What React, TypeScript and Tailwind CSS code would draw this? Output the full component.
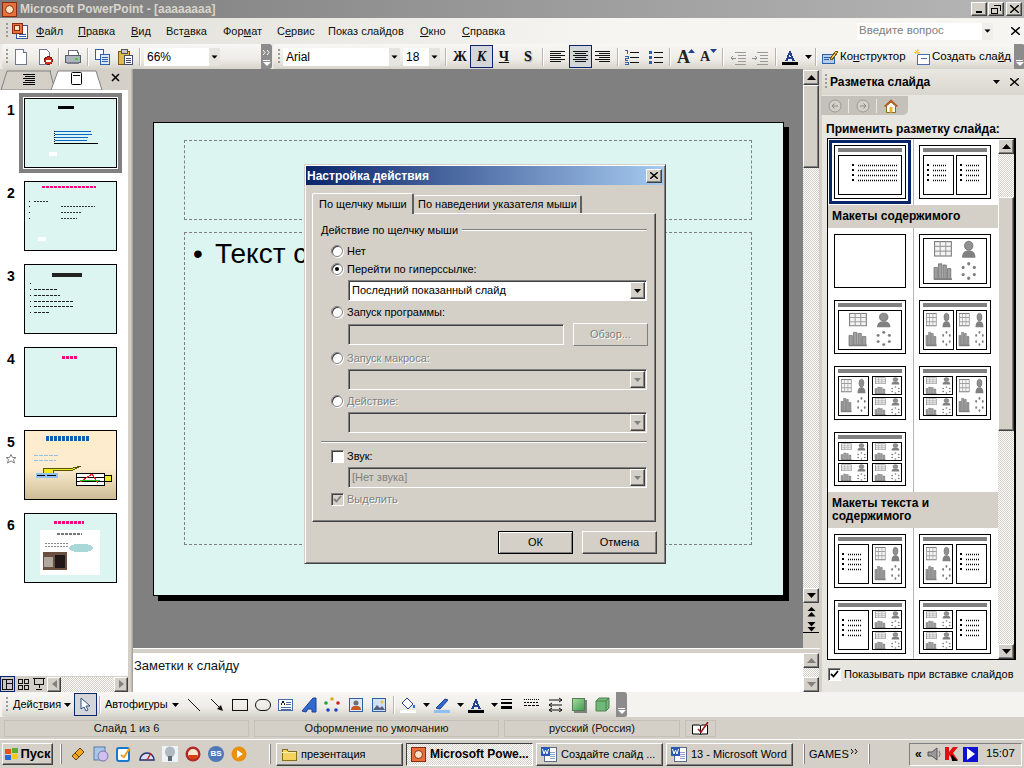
import type { ReactNode } from "react";

const raised =
  "border border-t-white border-l-white border-r-[#404040] border-b-[#404040] bg-[#d4d0c8] shadow-[inset_-1px_-1px_0_#808080]";
const sunken =
  "border border-t-[#808080] border-l-[#808080] border-r-white border-b-white shadow-[inset_1px_1px_0_#404040]";
const checker = "bg-[repeating-conic-gradient(#d4d0c8_0_25%,#ffffff_0_50%)] bg-[length:2px_2px]";
const disabledText = "text-[#808080] [text-shadow:1px_1px_0_#ffffff]";
const band = "bg-[linear-gradient(#f8f7f4,#eeece7_60%,#d6d3ca)]";

function Ic({ c = "", w = 16, h = 16, children }: { c?: string; w?: number; h?: number; children: ReactNode }) {
  return (
    <svg width={w} height={h} viewBox={`0 0 ${w} ${h}`} className={`shrink-0 block ${c}`} shapeRendering="crispEdges">
      {children}
    </svg>
  );
}

function Grip({ c = "" }: { c?: string }) {
  return <div className={`w-[2px] h-[16px] shrink-0 bg-[repeating-linear-gradient(#9c9a92_0_2px,transparent_2px_4px)] ${c}`} />;
}

function Sep({ c = "" }: { c?: string }) {
  return <div className={`w-px h-[18px] shrink-0 bg-[#b8b5ac] shadow-[1px_0_0_#ffffff] ${c}`} />;
}

function Chevron({ c = "", more = false }: { c?: string; more?: boolean }) {
  return (
    <div className={`w-[11px] h-[25px] shrink-0 bg-[#8c8c8c] rounded-r-[3px] flex flex-col items-center justify-end pb-[3px] ${c}`}>
      {more && (
        <svg width="7" height="5" viewBox="0 0 7 5" className="mb-[5px] block">
          <path d="M0 0l2 2.500L0 5M4 0l2 2.500L4 5" fill="none" stroke="#ffffff" />
        </svg>
      )}
      <div className="w-[7px] h-px bg-white mb-px" />
      <div className="w-0 h-0 border-x-[4px] border-x-transparent border-t-[4px] border-t-white" />
    </div>
  );
}

function Arrow({ c = "", color = "#000000" }: { c?: string; color?: string }) {
  return (
    <svg width="7" height="4" viewBox="0 0 7 4" className={`shrink-0 block ${c}`}>
      <path d="M0 0h7L3.500 4z" fill={color} />
    </svg>
  );
}

function TbCombo({ w, label }: { w: string; label: string }) {
  return (
    <div className={`${w} h-[18px] bg-white shrink-0 flex items-center pl-[3px] text-[12px] text-black`}>
      <span className="flex-1">{label}</span>
      <div className="w-[11px] h-full bg-[#e6e4de] flex items-center justify-center">
        <Arrow c="scale-90" />
      </div>
    </div>
  );
}

function ToolLetter({ c = "", active = false, children }: { c?: string; active?: boolean; children: ReactNode }) {
  return (
    <div
      className={`shrink-0 flex items-center justify-center font-['Liberation_Serif',serif] font-bold text-[14px] text-[#111111] ${
        active ? "w-[23px] h-[23px] border border-[#0a246a] bg-[#d5d6da]" : "w-[18px] h-[22px]"
      } ${c}`}
    >
      {children}
    </div>
  );
}

function Lines({ rows }: { rows: [number, number][] }) {
  return (
    <Ic>
      {rows.map(([a, b], i) => (
        <rect key={i} x={a} y={2 + i * 2} width={b - a} height="1" fill="#111111" />
      ))}
    </Ic>
  );
}

function Doc() {
  return (
    <Ic>
      <path d="M2.500 .5h8l3 3v12h-11z" fill="#ffffff" stroke="#6f7a90" />
      <path d="M10.500 .5v3h3" fill="#dfe5f2" stroke="#6f7a90" />
    </Ic>
  );
}

function DocPerm() {
  return (
    <Ic>
      <path d="M2.500 .5h7l3 3v12h-10z" fill="#ffffff" stroke="#6f7a90" />
      <circle cx="11.500" cy="11.500" r="4" fill="#d62b1f" stroke="#7a1510" />
      <rect x="9" y="11" width="5" height="1.500" fill="#ffffff" />
    </Ic>
  );
}

function Printer() {
  return (
    <Ic>
      <path d="M4 1h8l2 5H3z" fill="#ffffff" stroke="#6a6f7c" />
      <rect x=".5" y="6.500" width="15" height="7" rx="1" fill="#aeb4bf" stroke="#5a5f6c" />
      <rect x="10" y="9" width="3" height="2" fill="#3dd13a" />
      <rect x="2" y="13" width="12" height="2" fill="#7b808c" />
    </Ic>
  );
}

function Copy() {
  return (
    <Ic>
      <rect x="1.500" y=".5" width="8" height="10" fill="#ffffff" stroke="#2f5fa8" />
      <rect x="6.500" y="5.500" width="9" height="10" fill="#dbe7fa" stroke="#2f5fa8" />
      <path d="M8 8h6M8 10h6M8 12h6" stroke="#2f5fa8" />
    </Ic>
  );
}

function Paste() {
  return (
    <Ic>
      <rect x="1.500" y="2.500" width="11" height="13" fill="#e3b94e" stroke="#7d5a14" />
      <rect x="4" y="0" width="6" height="4" fill="#c9c9c9" stroke="#555555" />
      <rect x="7.500" y="6.500" width="8" height="9" fill="#ffffff" stroke="#44506a" />
      <path d="M9 9h5M9 11h5M9 13h5" stroke="#44506a" />
    </Ic>
  );
}

function Numbering() {
  return (
    <Ic>
      <path d="M1 1h2v4M1 7h3v2H1v2h3M1 13h3v2H1" fill="none" stroke="#2f5fa8" />
      <path d="M6 3h9M6 8h9M6 13h9" stroke="#111111" />
    </Ic>
  );
}

function Bullets() {
  return (
    <Ic>
      <rect x="1" y="2" width="3" height="3" fill="#2f5fa8" />
      <rect x="1" y="7" width="3" height="3" fill="#2f5fa8" />
      <rect x="1" y="12" width="3" height="3" fill="#2f5fa8" />
      <path d="M6 3h9M6 8h9M6 13h9" stroke="#111111" />
    </Ic>
  );
}

function Indent({ flip = false }: { flip?: boolean }) {
  return (
    <Ic w={18}>
      <path d="M6 3h11M9 6h8M9 9h8M9 12h8M6 15h11" stroke="#9a9a94" />
      <path d={flip ? "M1 9h5M4 7l2 2-2 2" : "M7 9H2M4 7L2 9l2 2"} stroke="#8e8e88" fill="none" />
    </Ic>
  );
}

function FontColor({ color = "#000000" }: { color?: string }) {
  return (
    <Ic>
      <path d="M3 12L8 1l5 11h-2.400L9.600 9.500H6.400L5.400 12zM7 8h2L8 5z" fill="#1f3f8f" />
      <rect x="0" y="13" width="16" height="3" fill={color} />
    </Ic>
  );
}

function Designer() {
  return (
    <Ic>
      <rect x=".5" y="5.500" width="12" height="9" fill="#b7ccec" stroke="#2f5fa8" />
      <path d="M2 8h6M2 10h5" stroke="#2f5fa8" />
      <path d="M8 10l6-8 2 1-6 8z" fill="#f0c34a" stroke="#7d5a14" />
    </Ic>
  );
}

function NewSlide() {
  return (
    <Ic>
      <rect x="3.500" y="5.500" width="12" height="10" fill="#ffffff" stroke="#4b6ca8" />
      <path d="M7 9h6" stroke="#4b6ca8" />
      <path d="M3 0v6M0 3h6M1 1l4 4M5 1L1 5" stroke="#f2cc3c" />
    </Ic>
  );
}

function PptIcon() {
  return (
    <div className="w-[15px] h-[15px] bg-[#e8703a] border border-[#8a2a10] flex items-center justify-center shrink-0">
      <div className="w-[9px] h-[9px] rounded-full bg-[#fbe3c4] border border-[#8a2a10]" />
    </div>
  );
}

function MenuDocIcon() {
  return (
    <Ic w={18} h={18} c="ml-[3px]">
      <rect x="5.500" y="3.500" width="11" height="13" fill="#ffffff" stroke="#3a5aa8" />
      <path d="M8 12h7M8 14h7" stroke="#3a5aa8" />
      <rect x="1" y="1" width="10" height="10" fill="#e8703a" stroke="#8a2a10" />
      <circle cx="6" cy="6" r="3" fill="#fbe3c4" stroke="#8a2a10" />
    </Ic>
  );
}

function WordIcon() {
  return (
    <Ic>
      <rect x="3.500" y="1.500" width="12" height="14" fill="#ffffff" stroke="#5a6a8a" />
      <path d="M9 6h5M9 8h5M9 10h5M9 12h5" stroke="#8aa0c8" />
      <rect x="0" y="1" width="9" height="9" fill="#2a58b8" />
      <path d="M1.500 3l1.500 5 1.500-4 1.500 4 1.500-5" stroke="#ffffff" fill="none" shapeRendering="auto" />
    </Ic>
  );
}

function FolderIcon() {
  return (
    <Ic>
      <path d="M1 3h5l1 2h8v9H1z" fill="#f5d25c" stroke="#8a6d14" />
      <path d="M1 6h14" stroke="#fff2b0" />
    </Ic>
  );
}

function ScrollBtn({ dir = "up", c = "", grey = false }: { dir?: "up" | "down"; c?: string; grey?: boolean }) {
  return (
    <div className={`w-[16px] h-[15px] shrink-0 flex items-center justify-center ${raised} ${c}`}>
      <svg width="9" height="5" viewBox="0 0 9 5">
        <path d={dir === "up" ? "M4.500 0L9 5H0z" : "M0 0h9L4.500 5z"} fill={grey ? "#808080" : "#000000"} />
      </svg>
    </div>
  );
}

function DoubleArrow({ dir }: { dir: "up" | "down" }) {
  return (
    <svg width="9" height="10" viewBox="0 0 9 10" className="block">
      <path
        d={dir === "up" ? "M4.500 0L8.500 4H.5zM4.500 5l4 4.500H.5z" : "M.5 0h8l-4 4.500zM.5 5h8l-4 4.500z"}
        fill="#000000"
      />
    </svg>
  );
}

/* slide thumbnails in the left pane */
function SlideThumb({ n, selected = false, star = false, children, bg = "#ddf5f0" }: { n: number; selected?: boolean; star?: boolean; children?: ReactNode; bg?: string }) {
  return (
    <div className="flex h-[83px] shrink-0">
      <div className="w-[24px] pl-[7px] pt-[5px] text-[14px] font-bold text-black leading-[15px]">
        {n}
        {star && (
          <svg width="12" height="10" viewBox="0 0 12 10" className="block mt-[4px] -ml-[2px]">
            <path d="M6 .5l1.500 3h3.500L8.500 5.500l1 3.500L6 7 2.500 9l1-3.500L1 3.500h3.500z" fill="none" stroke="#808080" />
          </svg>
        )}
      </div>
      <svg
        width="93"
        height="70"
        viewBox="0 0 93 70"
        shapeRendering="crispEdges"
        className={`block shrink-0 ${selected ? "outline-[4px] outline-[#808080] outline-offset-[1px]" : ""}`}
      >
        <rect x=".5" y=".5" width="92" height="69" fill={bg} stroke="#000000" />
        {children}
      </svg>
    </div>
  );
}

/* layout previews in the task pane */
function Cluster({ x, y, sx, sy }: { x: number; y: number; sx: number; sy: number }) {
  return (
    <g transform={`translate(${x} ${y}) scale(${sx} ${sy})`}>
      <rect x=".5" y=".5" width="15" height="12" fill="#f4f4f4" stroke="#808080" />
      <path d="M.5 4.500h15M.5 8.500h15M5.500 .5v12M10.500 .5v12" stroke="#a0a0a0" />
      <circle cx="31" cy="4" r="3.800" fill="#909090" stroke="#606060" strokeWidth=".6" />
      <path d="M25 14c0-5 3-6 6-6s6 1 6 6z" fill="#808080" />
      <path d="M0 32V22h3v10zM4 32V19h3v13zM8 32V20h3v12zM12 32V23h3v9z" fill="#a0a0a0" stroke="#606060" strokeWidth=".6" />
      <rect x="0" y="31" width="16" height="1.500" fill="#808080" />
      <g fill="#808080">
        <circle cx="31" cy="19" r="1.400" />
        <circle cx="36" cy="22" r="1.400" />
        <circle cx="36" cy="28" r="1.400" />
        <circle cx="31" cy="31" r="1.400" />
        <circle cx="26" cy="28" r="1.400" />
        <circle cx="26" cy="22" r="1.400" />
      </g>
    </g>
  );
}

function TextList({ x, y, w }: { x: number; y: number; w: number }) {
  return (
    <g>
      {[0, 1, 2, 3].map((i) => (
        <g key={i}>
          <rect x={x} y={y + i * 5} width="2" height="2" fill="#000000" />
          <path d={`M${x + 6} ${y + i * 5 + 1.5}h${w}`} stroke="#000000" strokeWidth="1.500" strokeDasharray="1 1" fill="none" />
        </g>
      ))}
    </g>
  );
}

type Frame = [number, number, number, number, "" | "list" | "big" | "mid" | "small"];

function Layout({ frames, title = true, c = "" }: { frames: Frame[]; title?: boolean; c?: string }) {
  return (
    <svg width="72" height="54" viewBox="0 0 72 54" className={`block shrink-0 ${c}`}>
      <rect x=".5" y=".5" width="71" height="53" fill="#ffffff" stroke="#000000" />
      {title && <rect x="4" y="3" width="64" height="4" fill="#808080" />}
      {frames.map(([x, y, w, h, kind], i) => (
        <g key={i}>
          <rect x={x + 0.5} y={y + 0.5} width={w - 1} height={h - 1} fill="#ffffff" stroke="#000000" />
          {kind === "list" && <TextList x={x + (w > 40 ? 14 : 4)} y={y + (h > 30 ? 9 : 7)} w={w > 40 ? 39 : 14} />}
          {kind === "big" && <Cluster x={x + 11} y={y + 3} sx={1.12} sy={h > 40 ? 1.2 : 1.02} />}
          {kind === "mid" && <Cluster x={x + 3} y={y + 3} sx={0.66} sy={1.02} />}
          {kind === "small" && <Cluster x={x + 3} y={y + 1.5} sx={0.66} sy={0.5} />}
        </g>
      ))}
    </svg>
  );
}

function LayoutRow({ left, right }: { left?: ReactNode; right?: ReactNode }) {
  return (
    <div className="flex shrink-0 h-[66px] pt-[6px] relative">
      <div className="w-[85px] shrink-0 pl-[6px]">{left}</div>
      <div className="w-px -mt-[6px] shrink-0 bg-[#b4b4b0]" />
      <div className="pl-[5px]">{right}</div>
    </div>
  );
}

/* dialog bits */
function Radio({ checked = false, label, disabled = false, c = "" }: { checked?: boolean; label: string; disabled?: boolean; c?: string }) {
  return (
    <div className={`flex items-center h-[14px] pl-[18px] shrink-0 ${c}`}>
      <div className="w-[12px] h-[12px] rounded-full bg-white border border-[#808080] shadow-[inset_1px_1px_0_#404040,1px_1px_0_#ffffff] flex items-center justify-center">
        {checked && <div className="w-[4px] h-[4px] rounded-full bg-black" />}
      </div>
      <span className={`ml-[4px] text-[11px] ${disabled ? disabledText : "text-black"}`}>{label}</span>
    </div>
  );
}

function DlgSelect({ value = "", disabled = false, c = "" }: { value?: string; disabled?: boolean; c?: string }) {
  return (
    <div className={`ml-[35px] w-[299px] h-[21px] flex items-center shrink-0 pr-[1px] ${sunken} ${disabled ? "bg-[#d4d0c8]" : "bg-white"} ${c}`}>
      <span className={`flex-1 pl-[3px] text-[11px] ${disabled ? "text-[#808080]" : "text-black"}`}>{value}</span>
      <div className={`w-[15px] h-[17px] flex items-center justify-center ${raised}`}>
        <Arrow color={disabled ? "#808080" : "#000000"} />
      </div>
    </div>
  );
}

function DlgButton({ label, def = false, c = "" }: { label: string; def?: boolean; c?: string }) {
  return (
    <div className={`w-[75px] h-[23px] flex items-center justify-center text-[11px] text-black bg-[#d4d0c8] ${def ? "border border-black shadow-[inset_1px_1px_0_#ffffff,inset_-1px_-1px_0_#808080]" : raised} ${c}`}>
      {label}
    </div>
  );
}

function Dialog() {
  return (
    <div className="absolute left-[304px] top-[164px] w-[362px] h-[400px] bg-[#d4d0c8] border border-t-[#d4d0c8] border-l-[#d4d0c8] border-r-[#404040] border-b-[#404040] shadow-[inset_1px_1px_0_#ffffff,inset_-1px_-1px_0_#808080] p-[1px] flex flex-col">
      <div className="h-[19px] shrink-0 bg-[linear-gradient(90deg,#0a246a,#a6caf0)] flex items-center justify-between pl-[1px] pr-[2px]">
        <span className="text-white font-bold text-[12px]">Настройка действия</span>
        <div className={`w-[16px] h-[14px] flex items-center justify-center ${raised}`}>
          <svg width="8" height="7" viewBox="0 0 8 7">
            <path d="M0 0l8 7M8 0L0 7" stroke="#000000" strokeWidth="1.400" />
          </svg>
        </div>
      </div>
      <div className="flex items-end h-[28px] shrink-0 pl-[6px] whitespace-nowrap">
        <div className="w-[102px] h-[21px] bg-[#d4d0c8] border-t border-l border-white rounded-t-[2px] border-r-2 border-r-[#606060] -mb-px z-10 flex items-center pl-[6px] text-[11px] text-black">
          По щелчку мыши
        </div>
        <div className="w-[168px] h-[18px] bg-[#d4d0c8] border-t border-white border-r-2 border-r-[#606060] rounded-t-[2px] flex items-center pl-[4px] text-[11px] text-black">
          По наведении указателя мыши
        </div>
      </div>
      <div className="ml-[6px] w-[344px] h-[309px] shrink-0 border border-t-white border-l-white border-r-[#404040] border-b-[#404040] flex flex-col shadow-[inset_-1px_-1px_0_#808080]">
        <div className="flex items-center h-[14px] mt-[9px] pl-[8px] pr-[8px] shrink-0">
          <span className="text-[11px] text-black whitespace-nowrap">Действие по щелчку мыши</span>
          <div className="flex-1 ml-[4px] h-[2px] border-t border-[#808080] border-b border-b-white" />
        </div>
        <Radio label="Нет" c="mt-[7px]" />
        <Radio label="Перейти по гиперссылке:" checked c="mt-[4px]" />
        <DlgSelect value="Последний показанный слайд" c="mt-[4px]" />
        <Radio label="Запуск программы:" c="mt-[4px]" />
        <div className="flex items-center mt-[4px] shrink-0 ml-[35px]">
          <div className={`w-[216px] h-[21px] ${sunken}`} />
          <div className={`ml-[9px] w-[75px] h-[23px] flex items-center justify-center text-[11px] border border-t-white border-l-white border-r-[#808080] border-b-[#808080] ${disabledText}`}>
            Обзор...
          </div>
        </div>
        <Radio label="Запуск макроса:" disabled c="mt-[5px]" />
        <DlgSelect disabled c="mt-[4px]" />
        <Radio label="Действие:" disabled c="mt-[4px]" />
        <DlgSelect disabled c="mt-[4px]" />
        <div className="mx-[8px] mt-[8px] h-[2px] shrink-0 border-t border-[#808080] border-b border-b-white" />
        <div className="flex items-center h-[14px] mt-[6px] pl-[18px] shrink-0">
          <div className={`w-[13px] h-[13px] bg-white ${sunken}`} />
          <span className="ml-[3px] text-[11px] text-black">Звук:</span>
        </div>
        <DlgSelect value="[Нет звука]" disabled c="mt-[4px]" />
        <div className="flex items-center h-[14px] mt-[4px] pl-[18px] shrink-0">
          <div className={`w-[13px] h-[13px] flex items-center justify-center ${sunken}`}>
            <svg width="9" height="8" viewBox="0 0 9 8">
              <path d="M1 4l2.500 2.500L8 1" fill="none" stroke="#808080" strokeWidth="1.800" />
            </svg>
          </div>
          <span className={`ml-[3px] text-[11px] ${disabledText}`}>Выделить</span>
        </div>
      </div>
      <div className="flex justify-end gap-[9px] mt-[9px] pr-[7px] shrink-0">
        <DlgButton label="ОК" def />
        <DlgButton label="Отмена" />
      </div>
    </div>
  );
}

function TaskBtn({ icon, label, active = false, c = "" }: { icon: ReactNode; label: string; active?: boolean; c?: string }) {
  return (
    <div
      className={`w-[127px] h-[23px] shrink-0 flex items-center pl-[4px] gap-[4px] whitespace-nowrap overflow-hidden text-black ${
        active
          ? `border border-t-[#404040] border-l-[#404040] border-r-white border-b-white ${checker} font-bold text-[12px]`
          : `${raised} text-[11px]`
      } ${c}`}
    >
      {icon}
      {label}
    </div>
  );
}

const layoutOne: Frame[] = [[4, 10, 64, 40, "list"]];
const layoutTwo: Frame[] = [[4, 10, 31, 40, "list"], [37, 10, 31, 40, "list"]];
const titleBig: Frame[] = [[4, 10, 64, 40, "big"]];
const twoBig: Frame[] = [[4, 10, 31, 40, "mid"], [37, 10, 31, 40, "mid"]];
const leftRightQuad: Frame[] = [[4, 10, 31, 40, "mid"], [38, 10, 30, 19, "small"], [38, 31, 30, 19, "small"]];
const rightLeftQuad: Frame[] = [[4, 10, 30, 19, "small"], [4, 31, 30, 19, "small"], [37, 10, 31, 40, "mid"]];
const fourQuad: Frame[] = [[4, 10, 30, 19, "small"], [38, 10, 30, 19, "small"], [4, 31, 30, 19, "small"], [38, 31, 30, 19, "small"]];
const textBig: Frame[] = [[4, 10, 31, 40, "list"], [38, 10, 30, 40, "mid"]];
const bigText: Frame[] = [[4, 10, 30, 40, "mid"], [37, 10, 31, 40, "list"]];
const textQuad: Frame[] = [[4, 10, 31, 40, "list"], [38, 10, 30, 19, "small"], [38, 31, 30, 19, "small"]];
const quadText: Frame[] = [[4, 10, 30, 19, "small"], [4, 31, 30, 19, "small"], [37, 10, 31, 40, "list"]];

export default function App() {
  return (
    <div className="relative w-[1024px] h-[768px] overflow-hidden flex flex-col bg-[#d4d0c8] font-['Liberation_Sans',sans-serif] text-[11px] text-black select-none">
      {/* title bar */}
      <div className="h-[18px] shrink-0 bg-[linear-gradient(90deg,#7c7c7c,#b6b6b6)] flex items-center pl-[2px] pr-[2px]">
        <PptIcon />
        <span className="ml-[3px] text-[#d8d5cd] font-bold text-[12px] whitespace-nowrap">Microsoft PowerPoint - [aaaaaaaa]</span>
        <div className="ml-auto flex">
          <div className={`w-[16px] h-[14px] flex items-end justify-center pb-[2px] ${raised}`}>
            <div className="w-[6px] h-[2px] bg-black" />
          </div>
          <div className={`w-[16px] h-[14px] ml-px flex items-center justify-center ${raised}`}>
            <svg width="10" height="9" viewBox="0 0 10 9" shapeRendering="crispEdges">
              <path d="M3 .5h6.500v5M.5 3.500h6v5h-6z" fill="none" stroke="#000000" />
            </svg>
          </div>
          <div className={`w-[16px] h-[14px] ml-[2px] flex items-center justify-center ${raised}`}>
            <svg width="9" height="8" viewBox="0 0 9 8">
              <path d="M0 0l9 8M9 0L0 8" stroke="#000000" strokeWidth="1.400" />
            </svg>
          </div>
        </div>
      </div>

      {/* menu */}
      <div className="h-[26px] shrink-0 bg-[linear-gradient(90deg,#dfddd6,#f6f5f2_60%)] flex items-center pl-[6px] text-[11px] text-[#111111]">
        <Grip />
        <MenuDocIcon />
        <div className="w-[7px] shrink-0" />
        <div className="w-[42px] shrink-0"><u>Ф</u>айл</div>
        <div className="w-[53px] shrink-0"><u>П</u>равка</div>
        <div className="w-[35px] shrink-0"><u>В</u>ид</div>
        <div className="w-[57px] shrink-0">Вст<u>а</u>вка</div>
        <div className="w-[54px] shrink-0">Фор<u>м</u>ат</div>
        <div className="w-[51px] shrink-0">С<u>е</u>рвис</div>
        <div className="w-[92px] shrink-0">Показ слайдов</div>
        <div className="w-[42px] shrink-0"><u>О</u>кно</div>
        <div className="w-[60px] shrink-0"><u>С</u>правка</div>
        <div className="ml-[335px] w-[136px] h-[17px] bg-white flex items-center pl-[2px] text-[#808080] text-[11.5px] shrink-0">
          <span className="flex-1">Введите вопрос</span>
          <div className="w-[11px] h-full bg-[#f0efeb] flex items-center justify-center">
            <Arrow c="scale-90" />
          </div>
        </div>
        <svg width="9" height="8" viewBox="0 0 9 8" className="ml-[18px] shrink-0">
          <path d="M0 0l9 8M9 0L0 8" stroke="#000000" strokeWidth="1.400" />
        </svg>
      </div>

      {/* formatting toolbars */}
      <div className="h-[25px] shrink-0 flex items-center bg-[#ecebe6] text-[12px]">
        <div className={`ml-[2px] h-[25px] w-[270px] shrink-0 flex items-center rounded-l-[3px] rounded-r-[3px] ${band}`}>
          <Grip c="ml-[4px]" />
          <div className="ml-[5px]"><Doc /></div>
          <div className="ml-[8px]"><DocPerm /></div>
          <Sep c="ml-[5px]" />
          <div className="ml-[6px]"><Printer /></div>
          <Sep c="ml-[6px]" />
          <div className="ml-[6px]"><Copy /></div>
          <div className="ml-[7px]"><Paste /></div>
          <Sep c="ml-[6px]" />
          <div className="ml-[4px]"><TbCombo w="w-[76px]" label="66%" /></div>
          <Chevron c="ml-auto" more />
        </div>
        <div className={`ml-px h-[25px] flex-1 flex items-center rounded-l-[3px] ${band}`}>
          <Grip c="ml-[5px]" />
          <div className="ml-[3px]"><TbCombo w="w-[117px]" label="Arial" /></div>
          <div className="ml-[3px]"><TbCombo w="w-[37px]" label="18" /></div>
          <Sep c="ml-[5px]" />
          <ToolLetter c="ml-[5px]">Ж</ToolLetter>
          <ToolLetter active c="ml-px italic">К</ToolLetter>
          <ToolLetter c="ml-[2px] underline">Ч</ToolLetter>
          <ToolLetter c="ml-[6px] [text-shadow:1px_1px_1px_#999999]">S</ToolLetter>
          <Sep c="ml-[5px]" />
          <div className="ml-[7px]"><Lines rows={[[0, 15], [0, 11], [0, 15], [0, 11], [0, 15], [0, 11]]} /></div>
          <div className="ml-[3px] w-[23px] h-[23px] border border-[#0a246a] bg-[#d5d6da] flex items-center justify-center shrink-0">
            <Lines rows={[[0, 15], [2, 13], [0, 15], [2, 13], [0, 15], [2, 13]]} />
          </div>
          <div className="ml-[3px]"><Lines rows={[[0, 15], [4, 15], [0, 15], [4, 15], [0, 15], [4, 15]]} /></div>
          <Sep c="ml-[6px]" />
          <div className="ml-[6px]"><Numbering /></div>
          <div className="ml-[8px]"><Bullets /></div>
          <Sep c="ml-[5px]" />
          <div className="ml-[7px] w-[16px] font-['Liberation_Serif',serif] font-bold text-[#222222] text-[18px] leading-none flex items-start shrink-0">
            A<Arrow c="rotate-180 mt-[1px] -ml-[2px]" color="#1f3f8f" />
          </div>
          <div className="ml-[7px] w-[16px] font-['Liberation_Serif',serif] font-bold text-[#222222] text-[14px] leading-none flex items-start shrink-0">
            A<Arrow c="mt-[-1px]" color="#1f3f8f" />
          </div>
          <Sep c="ml-[6px]" />
          <div className="ml-[6px]"><Indent /></div>
          <div className="ml-[4px]"><Indent flip /></div>
          <Sep c="ml-[6px]" />
          <div className="ml-[6px]"><FontColor /></div>
          <Arrow c="ml-[7px]" />
          <Sep c="ml-[3px]" />
          <div className="ml-[6px]"><Designer /></div>
          <span className="ml-[2px] whitespace-nowrap w-[74px] shrink-0 text-[11.5px]">Ко<u>н</u>структор</span>
          <NewSlide />
          <span className="ml-[2px] whitespace-nowrap w-[82px] shrink-0 text-[11.5px]">Создать сла<u>й</u>д</span>
          <Chevron c="ml-auto" />
        </div>
      </div>

      {/* main area */}
      <div className="flex h-[623px] shrink-0">
        {/* slide sorter */}
        <div className="w-[128px] shrink-0 flex flex-col bg-white">
          <div className="h-[21px] bg-[#d4d0c8] shrink-0">
            <svg width="128" height="21" viewBox="0 0 128 21" className="block">
              <path d="M1 21L7 2h44l-1 0 3 12 4 7z" fill="#d4d0c8" stroke="#808080" />
              <path d="M51 21l7-19h38l6 19z" fill="#ffffff" stroke="#808080" />
              <path d="M23 5h12M25 7h10M23 9h12M25 11h10M23 13h12M23 15h12" stroke="#000000" shapeRendering="crispEdges" />
              <rect x="71.500" y="3.500" width="10" height="12" rx="1" fill="#ffffff" stroke="#000000" />
              <path d="M73 6h7" stroke="#000000" shapeRendering="crispEdges" />
              <path d="M112 5l7 7M119 5l-7 7" stroke="#000000" strokeWidth="1.500" />
            </svg>
          </div>
          <div className="flex-1 flex flex-col pt-[8px] overflow-hidden">
            <SlideThumb n={1} selected>
              <rect x="34" y="8" width="16" height="3" fill="#000000" />
              <path d="M31 33h36M31 36h37M31 39h33M31 42h32" stroke="#0868c8" />
              <path d="M30 33v14" stroke="#000000" strokeDasharray="1 1" />
              <path d="M31 45h43" stroke="#000000" />
              <rect x="25" y="54" width="8" height="4" fill="#ffffff" />
            </SlideThumb>
            <SlideThumb n={2}>
              <path d="M18 6h54" stroke="#f00880" strokeWidth="2" strokeDasharray="3 1" />
              <path d="M10 20h14M37 25h34M37 31h20M37 37h16" stroke="#333333" strokeDasharray="2 1" />
              <path d="M5 20h1M5 25h1M5 31h1M5 37h1" stroke="#000000" />
              <rect x="14" y="56" width="8" height="4" fill="#ffffff" />
            </SlideThumb>
            <SlideThumb n={3}>
              <rect x="28" y="9" width="30" height="4" fill="#222222" />
              <path d="M10 25h24M10 31h26M10 37h40M10 42h40M10 48h15" stroke="#222222" strokeDasharray="3 1" />
              <path d="M6 19h1M6 25h1M6 31h1M6 37h1M6 42h1M6 48h1" stroke="#000000" />
            </SlideThumb>
            <SlideThumb n={4}>
              <path d="M38 10h15" stroke="#f00880" strokeWidth="3" strokeDasharray="3 1" />
            </SlideThumb>
            <SlideThumb n={5} star bg="#fdeccd">
              <defs>
                <linearGradient id="sand" x1="0" y1="0" x2="0" y2="1">
                  <stop offset=".55" stopColor="#fdeccd" />
                  <stop offset="1" stopColor="#cdbd96" />
                </linearGradient>
              </defs>
              <rect x="1" y="1" width="91" height="68" fill="url(#sand)" />
              <path d="M22 8h43" stroke="#1060b0" strokeWidth="5" strokeDasharray="3 1" />
              <path d="M10 25h24M10 30h22" stroke="#90c0f0" strokeDasharray="4 1" />
              <path d="M19 38h30l8-2-8 4H30l-1 4H19z" fill="#f0e820" stroke="#555500" />
              <rect x="12" y="43" width="22" height="5" fill="#90c0f0" />
              <path d="M13 45h8M23 45h9" stroke="#000000" />
              <rect x="52" y="43" width="28" height="12" fill="#ffffff" stroke="#000000" />
              <path d="M52 47h28M52 51h28" stroke="#000000" />
              <path d="M56 52l12-8 6 9" fill="none" stroke="#ff2020" />
              <path d="M56 50h20" stroke="#20c020" />
              <rect x="80" y="45" width="7" height="6" fill="#f0e820" stroke="#000000" />
            </SlideThumb>
            <SlideThumb n={6}>
              <path d="M30 9h30" stroke="#f00880" strokeWidth="3" strokeDasharray="3 1" />
              <rect x="16" y="17" width="60" height="45" fill="#ffffff" />
              <path d="M33 21h25" stroke="#777777" strokeWidth="1.500" strokeDasharray="3 1" />
              <path d="M21 30h24M21 33h24" stroke="#888888" strokeDasharray="2 1" />
              <ellipse cx="57" cy="35" rx="12" ry="4.500" fill="#a8d8d8" />
              <rect x="19" y="39" width="24" height="18" fill="#6a5040" />
              <rect x="20" y="44" width="9" height="10" fill="#b0a8a0" />
              <rect x="31" y="42" width="10" height="13" fill="#201818" />
            </SlideThumb>
          </div>
          <div className="h-[16px] shrink-0 flex items-center bg-[#d4d0c8]">
            <div className="w-[15px] h-[16px] border border-[#0a246a] bg-[#c8c8cc] flex items-center justify-center">
              <Ic w={11} h={11}>
                <path d="M.5 .5h10v10H.5zM4.500 .5v10M4.500 4.500h6" fill="none" stroke="#111111" />
              </Ic>
            </div>
            <div className="w-[16px] flex justify-center">
              <Ic w={11} h={11}>
                <path d="M.5 .5h4v4h-4zM6.500 .5h4v4h-4zM.5 6.500h4v4h-4zM6.500 6.500h4v4h-4z" fill="none" stroke="#111111" />
              </Ic>
            </div>
            <div className="w-[15px] flex justify-center">
              <Ic w={12} h={12}>
                <path d="M0 .5h12M1.500 1v5.500h9V1M6 7v3M3 11.500h6" fill="none" stroke="#111111" />
              </Ic>
            </div>
            <div className="ml-[1px] flex-1 flex items-center h-full">
              <div className={`w-[14px] h-[15px] flex items-center justify-center ${raised}`}>
                <div className="w-0 h-0 border-y-[4px] border-y-transparent border-r-[5px] border-r-[#808080]" />
              </div>
              <div className={`flex-1 h-[15px] ${checker}`} />
              <div className={`w-[14px] h-[15px] flex items-center justify-center ${raised}`}>
                <div className="w-0 h-0 border-y-[4px] border-y-transparent border-l-[5px] border-l-[#808080]" />
              </div>
            </div>
          </div>
        </div>

        {/* splitter */}
        <div className="w-[5px] shrink-0 bg-[linear-gradient(90deg,#d4d0c8_50%,#9a9a96)]" />

        {/* slide + notes */}
        <div className="w-[687px] shrink-0 flex flex-col">
          <div className="flex h-[579px] shrink-0">
            <div className="w-[670px] shrink-0 bg-[#808080] pl-[20px] pt-[53px]">
              <div className="w-[631px] h-[474px] bg-[#ddf5f0] border border-black shadow-[5px_5px_0_#000000] pl-[30px] pt-[17px] flex flex-col">
                <div className="w-[568px] h-[80px] border border-dashed border-[#808080] shrink-0" />
                <div className="w-[568px] h-[313px] mt-[12px] border border-dashed border-[#808080] shrink-0 pl-[8px] pt-[1px] flex text-[28px] leading-[40px] text-black">
                  <span className="w-[22px] shrink-0">•</span>
                  <span className="whitespace-nowrap">Текст слайда</span>
                </div>
              </div>
            </div>
            <div className="w-[17px] shrink-0 bg-[#d4d0c8] flex flex-col">
              <ScrollBtn c="mt-px" />
              <div className={`w-[16px] h-[83px] shrink-0 ${raised}`} />
              <div className={`w-[16px] flex-1 ${checker}`} />
              <ScrollBtn dir="down" />
              <div className="h-[30px] w-[16px] shrink-0 flex flex-col items-center gap-[5px] pt-[4px] border-b border-black">
                <DoubleArrow dir="up" />
                <DoubleArrow dir="down" />
              </div>
              <div className="h-[15px] shrink-0" />
            </div>
          </div>
          <div className="h-[5px] shrink-0 bg-[#d4d0c8] border-t border-white" />
          <div className="flex-1 flex">
            <div className="w-[670px] shrink-0 bg-white pl-[1px] text-[13px] leading-[15px] pt-[5px] text-[#111111]">Заметки к слайду</div>
            <div className="w-[17px] shrink-0 flex flex-col bg-[#d4d0c8]">
              <ScrollBtn grey />
              <div className={`flex-1 w-[16px] ${checker}`} />
              <ScrollBtn dir="down" grey />
            </div>
          </div>
        </div>

        {/* task pane */}
        <div className="w-[204px] shrink-0 bg-[#e8e6e1] border-l-2 border-l-[#d4d0c8] flex flex-col">
          <div className="h-[26px] shrink-0 bg-[linear-gradient(#eae8e3,#d9d6cd)] flex items-center pl-[3px]">
            <Grip />
            <span className="ml-[3px] font-bold text-[12px]">Разметка слайда</span>
            <Arrow c="ml-auto" />
            <svg width="9" height="8" viewBox="0 0 9 8" className="ml-[10px] mr-[5px]">
              <path d="M0 0l9 8M9 0L0 8" stroke="#000000" strokeWidth="1.400" />
            </svg>
          </div>
          <div className="h-[19px] w-[87px] shrink-0 mt-[1px] -ml-px bg-[#c4c1ba] rounded-br-[5px] flex items-center pl-[7px]">
            <svg width="14" height="14" viewBox="0 0 14 14"><circle cx="7" cy="7" r="6" fill="#d4d0c8" stroke="#9a9a94" /><path d="M10 7H4M6.500 4.500L4 7l2.500 2.500" fill="none" stroke="#8a8a84" /></svg>
            <div className="w-px h-[14px] bg-[#ece9e2] ml-[6px]" />
            <svg width="14" height="14" viewBox="0 0 14 14" className="ml-[7px]"><circle cx="7" cy="7" r="6" fill="#d4d0c8" stroke="#9a9a94" /><path d="M4 7h6M7.500 4.500L10 7l-2.500 2.500" fill="none" stroke="#8a8a84" /></svg>
            <div className="w-px h-[14px] bg-[#ece9e2] ml-[6px]" />
            <svg width="14" height="14" viewBox="0 0 14 14" className="ml-[7px]">
              <path d="M0 7l7-6.500L14 7l-1 1-6-5.500L1 8z" fill="#c04818" />
              <path d="M2.500 7L7 3l4.500 4v6.500h-9z" fill="#ffffff" stroke="#8a6d14" />
              <rect x="5.500" y="8" width="3" height="5.500" fill="#f0b030" />
            </svg>
          </div>
          <div className="h-[22px] shrink-0 font-bold text-[12px] pl-[4px] pt-[6px] leading-[16px] whitespace-nowrap">Применить разметку слайда:</div>
          <div className="mt-[1px] ml-[5px] w-[189px] h-[522px] shrink-0 bg-white border border-black flex overflow-hidden">
            <div className="w-[170px] shrink-0 flex flex-col overflow-hidden">
              <LayoutRow
                left={<Layout frames={layoutOne} c="outline-[3px] outline-[#0a246a] outline-offset-[2px]" />}
                right={<Layout frames={layoutTwo} />}
              />
              <div className="h-[23px] shrink-0 bg-[#d4d0c8] pl-[4px] font-bold text-[12px] leading-[23px]">Макеты содержимого</div>
              <LayoutRow left={<Layout frames={[]} title={false} />} right={<Layout frames={[[4, 4, 64, 46, "big"]]} title={false} />} />
              <LayoutRow left={<Layout frames={titleBig} />} right={<Layout frames={twoBig} />} />
              <LayoutRow left={<Layout frames={leftRightQuad} />} right={<Layout frames={rightLeftQuad} />} />
              <LayoutRow left={<Layout frames={fourQuad} />} />
              <div className="h-[36px] shrink-0 bg-[#d4d0c8] pl-[4px] pt-[5px] font-bold text-[12px] leading-[13px]">
                Макеты текста и
                <br />
                содержимого
              </div>
              <LayoutRow left={<Layout frames={textBig} />} right={<Layout frames={bigText} />} />
              <LayoutRow left={<Layout frames={textQuad} />} right={<Layout frames={quadText} />} />
            </div>
            <div className="w-[17px] shrink-0 flex flex-col border-r border-black">
              <ScrollBtn />
              <div className={`h-[43px] w-[16px] shrink-0 ${checker}`} />
              <div className={`h-[234px] w-[16px] shrink-0 ${raised}`} />
              <div className={`flex-1 w-[16px] ${checker}`} />
              <ScrollBtn dir="down" />
            </div>
          </div>
          <div className="flex items-center h-[20px] mt-[4px] pl-[6px] shrink-0 whitespace-nowrap text-[11px]">
            <div className={`w-[13px] h-[13px] bg-white flex items-center justify-center ${sunken}`}>
              <svg width="9" height="8" viewBox="0 0 9 8">
                <path d="M1 4l2.500 2.500L8 1" fill="none" stroke="#000000" strokeWidth="1.800" />
              </svg>
            </div>
            <span className="ml-[3px]">Показывать при вставке слайдов</span>
          </div>
        </div>
      </div>

      {/* drawing toolbar */}
      <div className="h-[25px] shrink-0 bg-[#f4f3f0] flex items-center text-[11px]">
        <div className={`ml-[2px] w-[625px] h-[25px] shrink-0 flex items-center rounded-l-[3px] ${band}`}>
          <Grip c="ml-[4px]" />
          <span className="ml-[5px] whitespace-nowrap w-[51px] shrink-0">Дейс<u>т</u>вия</span>
          <Arrow />
          <div className="ml-[3px] w-[23px] h-[23px] shrink-0 border border-[#0a246a] bg-[#d5d6da] flex items-center justify-center">
            <svg width="11" height="15" viewBox="0 0 11 15">
              <path d="M1 1v11l3-2 2 4 2-1-2-4h4z" fill="#ffffff" stroke="#2f4f80" />
            </svg>
          </div>
          <Sep c="ml-[2px]" />
          <span className="ml-[5px] whitespace-nowrap w-[67px] shrink-0">Автофи<u>г</u>уры</span>
          <Arrow />
          <svg width="14" height="14" viewBox="0 0 14 14" className="ml-[8px] shrink-0"><path d="M1 1l12 12" stroke="#111111" /></svg>
          <svg width="14" height="14" viewBox="0 0 14 14" className="ml-[9px] shrink-0"><path d="M1 1l10 10" stroke="#111111" /><path d="M13 13l-6-2 4-4z" fill="#111111" /></svg>
          <div className="ml-[8px] w-[16px] h-[12px] border border-[#111111] shrink-0" />
          <div className="ml-[7px] w-[16px] h-[12px] border border-[#111111] rounded-full shrink-0" />
          <Ic c="ml-[7px]">
            <rect x=".5" y="2.500" width="14" height="11" fill="#ffffff" stroke="#4b6ca8" />
            <path d="M8 5h5M8 7h5M3 10h10M3 12h10" stroke="#4b6ca8" />
            <path d="M3 8l2-4 2 4" fill="none" stroke="#111111" />
          </Ic>
          <svg width="16" height="16" viewBox="0 0 16 16" className="ml-[7px] shrink-0"><path d="M1 14L12 1h3v14h-4v-3H7l-2 3z" fill="#2f6ad0" stroke="#1f3f8f" /></svg>
          <svg width="16" height="16" viewBox="0 0 16 16" className="ml-[7px] shrink-0">
            <circle cx="8" cy="2" r="1.800" fill="#d0b020" />
            <circle cx="14" cy="6" r="1.800" fill="#d02020" />
            <circle cx="12" cy="13" r="1.800" fill="#2040c0" />
            <circle cx="4" cy="13" r="1.800" fill="#2040c0" />
            <circle cx="2" cy="6" r="1.800" fill="#20a040" />
          </svg>
          <svg width="14" height="14" viewBox="0 0 14 14" className="ml-[9px] shrink-0">
            <rect x=".5" y=".5" width="13" height="13" fill="#dfe8f8" stroke="#2f5fa8" />
            <circle cx="7" cy="5" r="2.500" fill="#707070" />
            <path d="M2 12c0-4 3-4 5-4s5 0 5 4z" fill="#c85a20" />
          </svg>
          <svg width="14" height="14" viewBox="0 0 14 14" className="ml-[9px] shrink-0">
            <rect x=".5" y=".5" width="13" height="13" fill="#cfe0f8" stroke="#2f5fa8" />
            <path d="M1 12l4-5 3 3 2-2 3 4z" fill="#506080" />
            <circle cx="10" cy="4" r="1.500" fill="#f0c030" />
          </svg>
          <Sep c="ml-[7px]" />
          <svg width="16" height="16" viewBox="0 0 16 16" className="ml-[6px] shrink-0">
            <path d="M2 6l5-5 6 6-5 5z" fill="#ffffff" stroke="#1f3f8f" />
            <path d="M14 8v3" stroke="#2f6ad0" strokeWidth="2" />
            <rect x="0" y="13" width="16" height="3" fill="#ffffff" />
          </svg>
          <Arrow c="ml-[7px]" />
          <svg width="16" height="16" viewBox="0 0 16 16" className="ml-[4px] shrink-0">
            <path d="M2 11l9-9 3 1-8 9z" fill="#2f6ad0" stroke="#1f3f8f" />
            <rect x="0" y="13" width="16" height="3" fill="#90c0f0" />
          </svg>
          <Arrow c="ml-[7px]" />
          <div className="ml-[4px]"><FontColor /></div>
          <Arrow c="ml-[7px]" />
          <div className="ml-[3px] w-[11px] h-[12px] shrink-0 flex flex-col gap-[2px]">
            <div className="h-px bg-black" />
            <div className="h-[2px] bg-black" />
            <div className="h-[3px] bg-black" />
          </div>
          <div className="ml-[12px] w-[15px] h-[11px] shrink-0 flex flex-col gap-[2px]">
            <div className="h-px bg-[repeating-linear-gradient(90deg,#000000_0_1px,transparent_1px_2px)]" />
            <div className="h-px bg-[repeating-linear-gradient(90deg,#000000_0_2px,transparent_2px_3px)]" />
            <div className="h-px bg-[repeating-linear-gradient(90deg,#000000_0_3px,transparent_3px_4px)]" />
          </div>
          <svg width="15" height="15" viewBox="0 0 15 15" className="ml-[9px] shrink-0">
            <path d="M1 3h13M11 1l3 2-3 2M14 8H1M4 6L1 8l3 2M1 13h13M4 11l-3 2 3 2M11 11l3 2-3 2" fill="none" stroke="#111111" />
          </svg>
          <div className="ml-[9px] w-[13px] h-[13px] shrink-0 bg-[linear-gradient(135deg,#a8d8a0,#40a050)] border border-[#508050] shadow-[2px_2px_0_#808080]" />
          <svg width="15" height="15" viewBox="0 0 15 15" className="ml-[10px] shrink-0">
            <path d="M1 4l3-3h10v10l-3 3H1z" fill="#70b878" stroke="#508050" />
            <path d="M1 4h10v10M11 4l3-3" fill="none" stroke="#508050" />
          </svg>
          <Chevron c="ml-auto" />
        </div>
      </div>

      {/* status bar */}
      <div className="h-[22px] shrink-0 flex items-center bg-[#d4d0c8] pl-[4px] text-[11px] text-[#111111]">
        <div className="w-[245px] h-[17px] border border-[#c4c0b8] flex items-center justify-center shrink-0">Слайд 1 из 6</div>
        <div className="ml-[5px] w-[245px] h-[17px] border border-[#c4c0b8] flex items-center justify-center shrink-0">Оформление по умолчанию</div>
        <div className="ml-[5px] w-[176px] h-[17px] border border-[#c4c0b8] flex items-center justify-center shrink-0">русский (Россия)</div>
        <div className="ml-[5px] w-[31px] h-[17px] border border-[#c4c0b8] flex items-center justify-center shrink-0">
          <svg width="18" height="13" viewBox="0 0 18 13">
            <path d="M.5 3h7l1 1 1-1h6v9h-6l-1 1-1-1h-7z" fill="#ffffff" stroke="#000000" />
            <path d="M8.500 4v8" stroke="#000000" />
            <path d="M6 7l3 3 7-10" fill="none" stroke="#a01818" strokeWidth="1.500" />
          </svg>
        </div>
      </div>

      {/* taskbar */}
      <div className="flex-1 bg-[#d4d0c8] border-t border-white flex items-center text-[11px] text-black">
        <div className={`ml-[2px] w-[51px] h-[22px] shrink-0 flex items-center justify-center gap-[2px] font-bold text-[13px] ${raised}`}>
          <svg width="14" height="13" viewBox="0 0 14 13" shapeRendering="crispEdges">
            <rect x="0" y="1" width="6" height="5" fill="#e8501c" />
            <rect x="7" y="0" width="6" height="5" fill="#58b030" />
            <rect x="0" y="7" width="6" height="5" fill="#2868d8" />
            <rect x="7" y="6" width="6" height="5" fill="#f8c818" />
          </svg>
          Пуск
        </div>
        <div className="ml-[7px] w-[2px] h-[20px] shrink-0 bg-[#808080] border-l border-white" />
        <div className="ml-[8px] flex gap-[7px] shrink-0">
          <svg width="16" height="16" viewBox="0 0 16 16"><path d="M2 10l8-8 4 4-8 8z" fill="#f0a820" stroke="#604010" /><path d="M5 7l4 4" stroke="#604010" /></svg>
          <svg width="16" height="16" viewBox="0 0 16 16"><rect x="1" y="1" width="11" height="13" fill="#a8c8e8" stroke="#5878a8" /><circle cx="10" cy="10" r="5" fill="#d0c0f0" stroke="#8070b0" /></svg>
          <svg width="16" height="16" viewBox="0 0 16 16"><rect x="1" y="2" width="12" height="13" rx="2" fill="#ffffff" stroke="#1878d0" strokeWidth="2" /><path d="M5 9l3 2 6-9" fill="none" stroke="#e8a020" strokeWidth="2" /></svg>
          <svg width="16" height="16" viewBox="0 0 16 16"><path d="M1 14a7 7 0 0 1 14 0z" fill="#d8e0f0" stroke="#203070" strokeWidth="1.500" /><path d="M8 14l4-7" stroke="#d02020" strokeWidth="1.500" /></svg>
          <svg width="16" height="16" viewBox="0 0 16 16"><rect width="16" height="16" fill="#eef3f8" /><ellipse cx="8" cy="6" rx="5" ry="5.500" fill="#b0b8c0" /><rect x="6" y="10" width="4" height="5" fill="#606870" /></svg>
          <svg width="16" height="16" viewBox="0 0 16 16"><circle cx="8" cy="8" r="7.500" fill="#b02828" /><circle cx="8" cy="8" r="5" fill="#f8e8d0" /><path d="M3.500 9h9a4.500 4.500 0 0 1-9 0z" fill="#d84010" /></svg>
          <div className="w-[16px] h-[16px] rounded-full bg-[#5078b8] text-white text-[8px] font-bold flex items-center justify-center">BS</div>
          <svg width="16" height="16" viewBox="0 0 16 16"><circle cx="8" cy="8" r="7.500" fill="#e89010" /><path d="M6 4l6 4-6 4z" fill="#ffffff" /></svg>
        </div>
        <div className="ml-[22px] w-[2px] h-[20px] shrink-0 bg-[#808080] border-l border-white" />
        <TaskBtn c="ml-[5px]" icon={<FolderIcon />} label="презентация" />
        <TaskBtn c="ml-[3px]" active icon={<PptIcon />} label="Microsoft Powe..." />
        <TaskBtn c="ml-[3px]" icon={<WordIcon />} label="Создайте слайд ..." />
        <TaskBtn c="ml-[3px]" icon={<WordIcon />} label="13 - Microsoft Word" />
        <div className="ml-[10px] w-[2px] h-[20px] shrink-0 bg-[#808080] border-l border-white" />
        <span className="ml-[4px] w-[42px] shrink-0">GAMES</span>
        <svg width="7" height="5" viewBox="0 0 7 5" className="-mt-[6px] mr-[10px] shrink-0 block">
          <path d="M0 0l2 2.500L0 5M4 0l2 2.500L4 5" fill="none" stroke="#000000" />
        </svg>
        <div className="w-[2px] h-[20px] shrink-0 bg-white border-r border-[#808080]" />
        <div className="ml-[39px] w-[113px] h-[23px] shrink-0 flex items-center pl-[5px] border border-t-[#808080] border-l-[#808080] border-r-white border-b-white">
          <span className="font-bold w-[12px] text-[12px]">«</span>
          <svg width="16" height="16" viewBox="0 0 16 16"><path d="M1 6h4l5-4v12l-5-4H1z" fill="#9a9a9a" stroke="#555555" /><path d="M12 5a5 5 0 0 1 0 6" fill="none" stroke="#707070" /></svg>
          <svg width="14" height="14" viewBox="0 0 14 14" className="ml-[2px]"><path d="M0 0h4v5l4-5h5L8 6l5 7H8L4 8v5H0z" fill="#e01010" /><path d="M6 7l7 7H7z" fill="#000000" /></svg>
          <div className="ml-[4px] w-[15px] h-[15px] bg-[#1010d0] flex items-center justify-center">
            <div className="w-0 h-0 border-y-[6px] border-y-transparent border-l-[8px] border-l-white" />
          </div>
          <span className="ml-[8px] text-[11.5px]">15:07</span>
        </div>
      </div>

      <Dialog />
    </div>
  );
}
